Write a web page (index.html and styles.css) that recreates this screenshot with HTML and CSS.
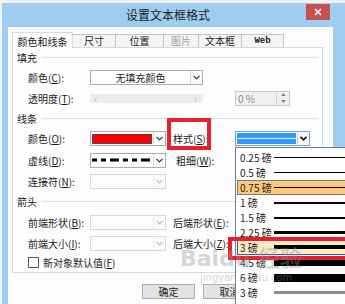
FILE: index.html
```html
<!DOCTYPE html>
<html lang="zh-CN">
<head>
    <meta charset="UTF-8">
    <title>设置文本框格式</title>
    <link rel="stylesheet" href="styles.css">
</head>
<body>

<div class="window">
    <div class="titlebar">
        <span class="title">设置文本框格式</span>
        <span class="close">
            <svg width="8" height="8" viewBox="0 0 8 8"><path d="M1 1L7 7M7 1L1 7" stroke="#fff" stroke-width="1.6"/></svg>
        </span>
    </div>

    <div class="client">
        <div class="tabs">
            <div class="tab active t1">颜色和线条</div>
            <div class="tab t2">尺寸</div>
            <div class="tab t3">位置</div>
            <div class="tab t4 off">图片</div>
            <div class="tab t5">文本框</div>
            <div class="tab t6 web">Web</div>
        </div>

        <div class="panel">
            <div class="sect h19"><span>填充</span><i class="rule"></i></div>

            <div class="row h21">
                <span class="lbl">颜色(<u>C</u>):</span>
                <div class="combo wide">
                    <span class="val">无填充颜色</span>
                    <span class="btn"><svg width="7" height="5" viewBox="0 0 7 5"><path d="M0.5 0.8L3.5 3.8L6.5 0.8" fill="none" stroke="#333" stroke-width="1.2"/></svg></span>
                </div>
            </div>

            <div class="row h20">
                <span class="lbl">透明度(<u>T</u>):</span>
                <div class="slider"><span>‹</span><span>›</span></div>
                <div class="spin">
                    <span class="val">0 %</span>
                    <span class="arrows">
                        <svg width="5" height="3" viewBox="0 0 5 3"><path d="M0 3L2.5 0L5 3Z" fill="#888"/></svg>
                        <svg width="5" height="3" viewBox="0 0 5 3"><path d="M0 0L2.5 3L5 0Z" fill="#888"/></svg>
                    </span>
                </div>
            </div>

            <div class="sect h20"><span>线条</span><i class="rule"></i></div>

            <div class="row h21">
                <span class="lbl">颜色(<u>O</u>):</span>
                <div class="combo">
                    <span class="val"><i class="swatch"></i></span>
                    <span class="btn"><svg width="7" height="5" viewBox="0 0 7 5"><path d="M0.5 0.8L3.5 3.8L6.5 0.8" fill="none" stroke="#333" stroke-width="1.2"/></svg></span>
                </div>
                <span class="lbl lbl2">样式(<u>S</u>):</span>
                <div class="combo style-combo">
                    <span class="val"><i class="sel-line"></i></span>
                    <span class="btn"><svg width="7" height="5" viewBox="0 0 7 5"><path d="M0.5 0.8L3.5 3.8L6.5 0.8" fill="none" stroke="#111" stroke-width="1.6"/></svg></span>
                </div>
            </div>

            <div class="row h22">
                <span class="lbl">虚线(<u>D</u>):</span>
                <div class="combo">
                    <span class="val">
                        <svg width="62" height="4" viewBox="0 0 62 4"><line x1="1" y1="2" x2="62" y2="2" stroke="#000" stroke-width="3" stroke-dasharray="5 4 5 4 9 4"/></svg>
                    </span>
                    <span class="btn"><svg width="7" height="5" viewBox="0 0 7 5"><path d="M0.5 0.8L3.5 3.8L6.5 0.8" fill="none" stroke="#333" stroke-width="1.2"/></svg></span>
                </div>
                <span class="lbl lbl3">粗细(<u>W</u>):</span>
            </div>

            <div class="row h20">
                <span class="lbl">连接符(<u>N</u>):</span>
                <div class="combo dis">
                    <span class="val"></span>
                    <span class="btn"><svg width="7" height="5" viewBox="0 0 7 5"><path d="M0.5 0.8L3.5 3.8L6.5 0.8" fill="none" stroke="#bbb" stroke-width="1.2"/></svg></span>
                </div>
            </div>

            <div class="sect h20"><span>箭头</span><i class="rule"></i></div>

            <div class="row h22">
                <span class="lbl">前端形状(<u>B</u>):</span>
                <div class="combo dis">
                    <span class="val"></span>
                    <span class="btn"><svg width="7" height="5" viewBox="0 0 7 5"><path d="M0.5 0.8L3.5 3.8L6.5 0.8" fill="none" stroke="#bbb" stroke-width="1.2"/></svg></span>
                </div>
                <span class="lbl lbl2">后端形状(<u>E</u>):</span>
            </div>

            <div class="row h20">
                <span class="lbl">前端大小(<u>I</u>):</span>
                <div class="combo dis">
                    <span class="val"></span>
                    <span class="btn"><svg width="7" height="5" viewBox="0 0 7 5"><path d="M0.5 0.8L3.5 3.8L6.5 0.8" fill="none" stroke="#bbb" stroke-width="1.2"/></svg></span>
                </div>
                <span class="lbl lbl2">后端大小(<u>Z</u>):</span>
            </div>

            <div class="row h19">
                <span class="check"></span>
                <span>新对象默认值(<u>F</u>)</span>
            </div>
        </div>

        <div class="buttons">
            <span class="button">确定</span>
            <span class="button">取消</span>
        </div>
    </div>
</div>

<!-- open drop-down of the line style combo -->
<div class="droplist">
    <div class="opt"><span class="pt">0.25 磅</span><i class="ln" style="height:1px"></i></div>
    <div class="opt"><span class="pt">0.5 磅</span><i class="ln" style="height:1px"></i></div>
    <div class="opt hot"><span class="pt">0.75 磅</span><i class="ln" style="height:1px"></i></div>
    <div class="opt"><span class="pt">1 磅</span><i class="ln" style="height:2px"></i></div>
    <div class="opt"><span class="pt">1.5 磅</span><i class="ln" style="height:2px"></i></div>
    <div class="opt"><span class="pt">2.25 磅</span><i class="ln" style="height:3px"></i></div>
    <div class="opt cur"><span class="pt">3 磅</span><i class="ln" style="height:4px"></i></div>
    <div class="opt"><span class="pt">4.5 磅</span><i class="ln" style="height:6px"></i></div>
    <div class="opt"><span class="pt">6 磅</span><i class="ln" style="height:8px"></i></div>
    <div class="opt"><span class="pt">3 磅</span><i class="ln double"></i></div>
</div>

<!-- red marks drawn on the screenshot -->
<div class="mark mark-style"></div>
<div class="mark mark-item"></div>

<div class="watermark">
    <span class="wm-big">Bai<b>du</b> 经验</span>
    <span class="wm-small">jingyan.baidu.com</span>
</div>

</body>
</html>
```

FILE: styles.css
```css
body {
    margin: 0;
    width: 345px;
    height: 304px;
    overflow: hidden;
    background-color: #f2f2f2;
    font-family: "Noto Sans CJK SC", "Noto Sans", sans-serif;
    font-size: 10px;
    color: #1a1a1a;
}
.window {
    margin: 3px 0 0 2px;
    width: 343px;
    height: 310px;
    background-color: #9fcdf2;
    display: flex;
    flex-direction: column;
}
.titlebar {
    height: 24px;
    display: flex;
    align-items: flex-start;
}
.title {
    flex: 1;
    padding-left: 28px;
    text-align: center;
    line-height: 24px;
    font-size: 12px;
    color: #222;
}
.close {
    width: 24px;
    height: 16px;
    margin: 1px 15px 0 0;
    background-color: #c75150;
    display: flex;
    align-items: center;
    justify-content: center;
}
.client {
    margin-left: 6px;
    width: 325px;
    flex: 1;
    background-color: #fdfdfd;
    padding: 5px 0 0 4px;
    box-sizing: border-box;
}

/* tabs */
.tabs {
    display: flex;
    align-items: flex-end;
    height: 15px;
}
.tab {
    box-sizing: border-box;
    height: 13px;
    margin-left: -1px;
    border: 1px solid #c4c4c4;
    border-bottom: none;
    background-color: #f4f4f4;
    text-align: center;
    line-height: 12px;
    white-space: nowrap;
}
.tab.active {
    height: 16px;
    margin-left: 0;
    margin-bottom: -1px;
    background-color: #fdfdfd;
    border-color: #d9d9d9;
    line-height: 17px;
    position: relative;
    z-index: 1;
}
.t1 { width: 61px; }
.t2 { width: 44px; }
.t3 { width: 49px; }
.t4 { width: 36px; }
.t5 { width: 44px; }
.t6 { width: 43px; }
.tab.off { color: #a3a3a3; }
.tab.web {
    font-family: "Liberation Mono", monospace;
    font-size: 9px;
    font-weight: bold;
}

/* page panel */
.panel {
    width: 311px;
    height: 226px;
    box-sizing: border-box;
    border: 1px solid #d9d9d9;
}
.h19 { height: 19px; }
.h20 { height: 20px; }
.h21 { height: 21px; }
.h22 { height: 22px; }
.sect {
    display: flex;
    align-items: center;
    padding-left: 4px;
}
.rule {
    flex: 1;
    height: 1px;
    margin: 0 4px 0 5px;
    background-color: #dedede;
}
.row {
    display: flex;
    align-items: center;
    padding-left: 15px;
}
.lbl {
    width: 62px;
    flex-shrink: 0;
    white-space: nowrap;
}
.lbl2 { margin-left: 7px; }
.lbl3 { margin-left: 10px; }
u { text-decoration-thickness: 1px; text-underline-offset: 1px; }

.combo {
    width: 76px;
    height: 15px;
    box-sizing: border-box;
    border: 1px solid #abadb3;
    background-color: #fff;
    display: flex;
}
.combo.wide { width: 113px; }
.combo .val {
    flex: 1;
    display: flex;
    align-items: center;
    justify-content: center;
    line-height: 13px;
}
.combo .btn {
    width: 12px;
    box-sizing: border-box;
    border-left: 1px solid #d4d4d4;
    display: flex;
    align-items: center;
    justify-content: center;
    background-color: #fafafa;
}
.combo.dis {
    border-color: #d9d9d9;
    background-color: #fcfcfc;
}
.combo.dis .btn { border-left-color: #ececec; }
.swatch {
    width: 60px;
    height: 10px;
    box-sizing: border-box;
    border: 1px solid #4a4a4a;
    background-color: #ff0000;
}
.style-combo {
    width: 75px;
    border-color: #7a9fd0;
}
.style-combo .val {
    background-color: #3399ff;
    margin: 1px;
}
.sel-line {
    width: 100%;
    height: 1px;
    background-color: #e8f3ff;
}

.slider {
    width: 113px;
    height: 9px;
    background-color: #ededed;
    display: flex;
    justify-content: space-between;
    align-items: center;
    padding: 0 6px 0 4px;
    box-sizing: border-box;
    color: #b5b5b5;
    font-size: 11px;
    line-height: 9px;
}
.spin {
    margin-left: 32px;
    width: 55px;
    height: 15px;
    box-sizing: border-box;
    border: 1px solid #c9c9c9;
    background-color: #f0f0f0;
    display: flex;
}
.spin .val {
    flex: 1;
    padding-left: 2px;
    color: #8d8d8d;
    line-height: 13px;
}
.spin .arrows {
    width: 12px;
    border-left: 1px solid #d4d4d4;
    display: flex;
    flex-direction: column;
    justify-content: space-around;
    align-items: center;
}
.check {
    width: 11px;
    height: 11px;
    box-sizing: border-box;
    border: 1px solid #555;
    background-color: #fff;
    margin-right: 4px;
}

.buttons {
    display: flex;
    gap: 8px;
    margin-top: 11px;
    padding-left: 130px;
}
.button {
    width: 53px;
    height: 15px;
    box-sizing: border-box;
    border: 1px solid #acacac;
    background-color: #e3e3e3;
    text-align: center;
    line-height: 13px;
}

/* drop-down list */
.droplist {
    position: absolute;
    left: 235px;
    top: 147px;
    width: 115px;
    height: 160px;
    box-sizing: border-box;
    border: 1px solid #6d7c96;
    background-color: #fff;
    padding: 2px 0 0 1px;
}
.opt {
    height: 15px;
    box-sizing: border-box;
    display: flex;
    align-items: center;
    padding-left: 3px;
}
.opt .pt {
    min-width: 33px;
    white-space: nowrap;
    line-height: 13px;
}
.opt .ln {
    flex: 1;
    background-color: #000;
    margin-left: 1px;
}
.opt .ln.double {
    height: 3px;
    background-color: #8c8c8c;
}
.opt.hot {
    background-color: #ffc778;
    border: 1px solid #75788a;
    padding-left: 2px;
}
.opt.cur {
    background-color: #fdebc2;
    border-left: 1px solid #3552c0;
    border-bottom: 1px solid #3552c0;
    padding-left: 2px;
}

.mark {
    position: absolute;
    box-sizing: border-box;
    border: 4px solid #e8202b;
}
.mark-style {
    left: 167px;
    top: 118px;
    width: 44px;
    height: 32px;
}
.mark-item {
    left: 228px;
    top: 237px;
    width: 125px;
    height: 23px;
}

.watermark {
    position: absolute;
    left: 180px;
    top: 246px;
    display: flex;
    flex-direction: column;
    color: rgba(150, 150, 150, 0.4);
    pointer-events: none;
}
.wm-big {
    font-family: "DejaVu Sans", sans-serif;
    font-size: 22px;
    font-weight: bold;
    line-height: 26px;
}
.wm-small {
    font-family: "DejaVu Sans", sans-serif;
    font-size: 10px;
    padding-left: 20px;
}
```
